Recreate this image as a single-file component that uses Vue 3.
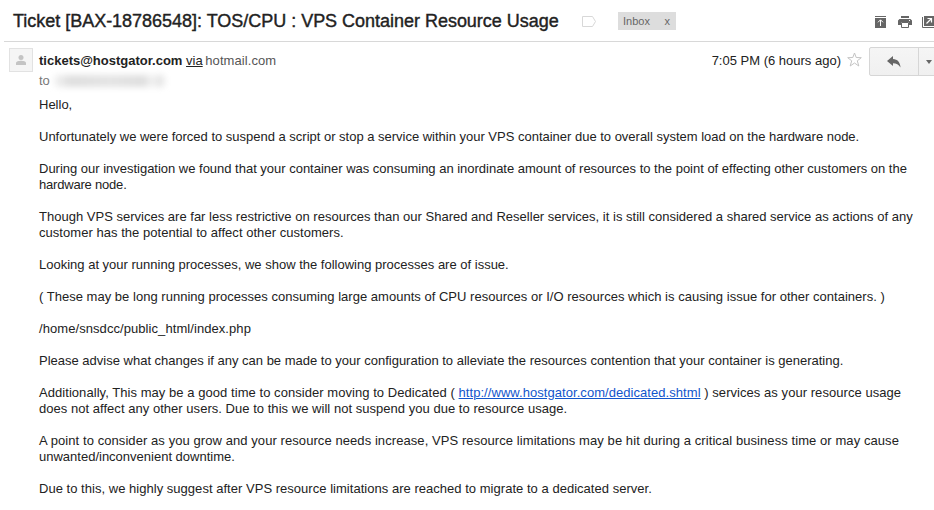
<template>
  <div class="mail">
    <header class="subject-bar">
      <h1 class="subject">Ticket [BAX-18786548]: TOS/CPU : VPS Container Resource Usage</h1>
      <svg class="tag" width="14" height="11" viewBox="0 0 14 11">
        <path d="M.5.5H10.5L13.5 5.5L10.5 10.5H.5Z" fill="#fff" stroke="#d8d8d8" />
      </svg>
      <div class="label">
        <span>Inbox</span>
        <span class="label-close">x</span>
      </div>
      <div class="tools">
        <svg class="archive" width="11" height="12" viewBox="0 0 11 12">
          <path d="M0 0H11V1H0ZM0 2H11V12H0Z" fill="#666" />
          <path d="M5.5 10V4M3 6.3L5.500 3.800L8 6.300" fill="none" stroke="#fff" />
        </svg>
        <svg width="14" height="12" viewBox="0 0 14 12">
          <path d="M3 0H11V2H3ZM1.500 3H12.500L14 4.500V9H11V6H3V9H0V4.500Z" fill="#666" />
          <path d="M3.500 6.500H10.500V11.500H3.500Z" fill="#fff" stroke="#666" />
          <path d="M11 4H12V5H11Z" fill="#fff" />
        </svg>
        <svg width="12" height="12" viewBox="0 0 12 12">
          <path d="M.5 1V11.500H12" fill="none" stroke="#666" />
          <path d="M2 0H12V10H2Z" fill="#666" />
          <path d="M4.500 7.500L9.500 2.500M5.500 2.500H9.500V6.500" fill="none" stroke="#fff" stroke-width="1.200" />
        </svg>
      </div>
    </header>

    <section class="sender-row">
      <div class="avatar">
        <svg width="10" height="10" viewBox="0 0 10 10">
          <circle cx="5" cy="2.5" r="2.5" fill="#c4c4c4" />
          <path d="M0 10V8C0 6.500 3 5.800 5 5.800S10 6.500 10 8V10Z" fill="#c4c4c4" />
        </svg>
      </div>
      <div class="sender">
        <div class="from"><b>tickets@hostgator.com</b> <u>via</u> <span class="domain">hotmail.com</span></div>
        <div class="to"><span>to</span><span class="recipient"></span></div>
      </div>
      <div class="date">7:05 PM (6 hours ago)</div>
      <svg class="star" width="15" height="15" viewBox="0 0 15 15">
        <path d="M7.500 1L9.200 5.500L14.300 5.700L10.300 8.800L11.800 14L7.500 11L3.200 14L4.700 8.800L.7 5.700L5.800 5.500Z" fill="#fff" stroke="#c4c4c4" />
      </svg>
      <div class="actions">
        <button class="reply">
          <svg width="14" height="12" viewBox="0 0 14 12">
            <path d="M0 5L6 0V3C10.500 3.300 13 6 13.500 11.500C11.500 8.300 9.500 7.200 6 7.200V10Z" fill="#666" />
          </svg>
        </button>
        <button class="more"><span class="caret"></span></button>
      </div>
    </section>

    <article class="body">
      <p v-for="(lines, i) in paragraphs" :key="i">
        <span v-for="(line, j) in lines" :key="j" class="line" :style="{ letterSpacing: line.spacing + 'px' }">{{ line.text }}<a v-if="line.link" href="#">{{ line.link }}</a>{{ line.after }}</span>
      </p>
    </article>
  </div>
</template>

<script setup>
const paragraphs = [
  [{ text: 'Hello,', spacing: 0 }],
  [{ text: 'Unfortunately we were forced to suspend a script or stop a service within your VPS container due to overall system load on the hardware node.', spacing: -0.01 }],
  [
    { text: 'During our investigation we found that your container was consuming an inordinate amount of resources to the point of effecting other customers on the', spacing: -0.013 },
    { text: 'hardware node.', spacing: -0.2 }
  ],
  [
    { text: 'Though VPS services are far less restrictive on resources than our Shared and Reseller services, it is still considered a shared service as actions of any', spacing: 0.01 },
    { text: 'customer has the potential to affect other customers.', spacing: 0.04 }
  ],
  [{ text: 'Looking at your running processes, we show the following processes are of issue.', spacing: 0 }],
  [{ text: '( These may be long running processes consuming large amounts of CPU resources or I/O resources which is causing issue for other containers. )', spacing: 0.02 }],
  [{ text: '/home/snsdcc/public_html/index.php', spacing: 0.07 }],
  [{ text: 'Please advise what changes if any can be made to your configuration to alleviate the resources contention that your container is generating.', spacing: 0 }],
  [
    { text: 'Additionally, This may be a good time to consider moving to Dedicated ( ', link: 'http://www.hostgator.com/dedicated.shtml', after: ' ) services as your resource usage', spacing: 0.053 },
    { text: 'does not affect any other users. Due to this we will not suspend you due to resource usage.', spacing: 0.033 }
  ],
  [
    { text: 'A point to consider as you grow and your resource needs increase, VPS resource limitations may be hit during a critical business time or may cause', spacing: 0.075 },
    { text: 'unwanted/inconvenient downtime.', spacing: 0 }
  ],
  [{ text: 'Due to this, we highly suggest after VPS resource limitations are reached to migrate to a dedicated server.', spacing: 0.028 }]
]
</script>

<style>
body {
  background: #fff;
  overflow: hidden;
}
</style>

<style scoped>
.mail {
  width: 934px;
  height: 510px;
  overflow: hidden;
  font-family: "Liberation Sans", Arial, sans-serif;
  font-size: 13px;
  line-height: 16px;
  color: #222;
  white-space: nowrap;
}

.subject-bar {
  display: flex;
  align-items: center;
  box-sizing: border-box;
  height: 42px;
  margin-left: 4px;
  padding-left: 9px;
  border-bottom: 1px solid #d8d8d8;
}

.subject {
  width: 569px;
  margin: 0;
  font-size: 18px;
  font-weight: 400;
  line-height: 22px;
  letter-spacing: -0.02px;
  -webkit-text-stroke: 0.4px #222;
}

.tag {
  flex: none;
  margin-top: 2px;
}

.label {
  display: flex;
  justify-content: space-between;
  box-sizing: border-box;
  width: 58px;
  height: 18px;
  margin-left: 22px;
  padding: 0 6px 0 5px;
  background: #ddd;
  color: #666;
  font-size: 11px;
  line-height: 18px;
}

.tools {
  display: flex;
  gap: 10px;
  margin-left: auto;
  margin-top: 3px;
}

.archive {
  margin-right: 2px;
}

.sender-row {
  display: flex;
  align-items: flex-start;
  height: 55px;
  padding-left: 9px;
}

.avatar {
  display: flex;
  align-items: center;
  justify-content: center;
  box-sizing: border-box;
  width: 24px;
  height: 24px;
  margin-top: 6px;
  border: 1px solid #e2e2e2;
  background: #f5f5f5;
}

.sender {
  margin-left: 6px;
  padding-top: 11px;
}

.domain {
  margin-left: -1px;
  color: #555;
  letter-spacing: 0.08px;
}

.to {
  display: flex;
  margin-top: 4px;
  color: #777;
}

.recipient {
  width: 112px;
  height: 12px;
  margin: 2px 0 0 4px;
  border-radius: 4px;
  background: linear-gradient(90deg, #f2f2f2, #dedede 15%, #e4e4e4 50%, #dedede 80%, #f4f4f4 88%, #e2e2e2 94%, #f6f6f6);
  filter: blur(3px);
}

.date {
  margin-left: auto;
  padding-top: 11px;
}

.star {
  margin: 10px 7px 0 6px;
}

.actions {
  display: flex;
  width: 65px;
  margin-top: 5px;
  overflow: hidden;
}

.actions button {
  display: flex;
  flex: none;
  align-items: center;
  justify-content: center;
  box-sizing: border-box;
  height: 29px;
  padding: 0;
  border: 1px solid #d6d6d6;
  background: linear-gradient(#f5f5f5, #f0f0f0);
}

.reply {
  width: 50px;
  border-radius: 2px 0 0 2px;
}

.actions .more {
  width: 22px;
  margin-left: -1px;
}

.caret {
  border: 3.5px solid transparent;
  border-top: 4px solid #666;
  border-bottom: 0;
}

.body {
  padding-left: 39px;
}

.body p {
  margin: 0 0 16px;
}

.line {
  display: block;
}

.line a {
  color: #15c;
}
</style>
